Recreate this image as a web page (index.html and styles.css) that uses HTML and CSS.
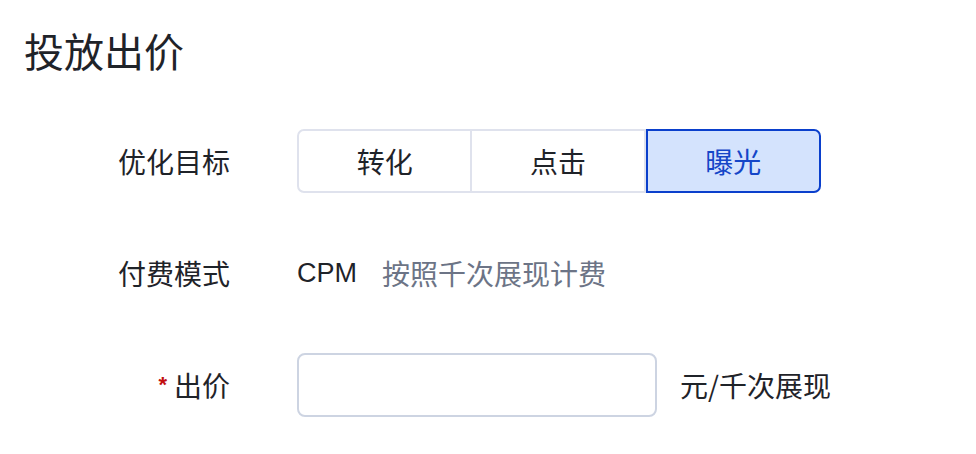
FILE: index.html
```html
<!DOCTYPE html>
<html lang="zh-CN">
<head>
  <meta charset="UTF-8">
  <meta name="viewport" content="width=device-width, initial-scale=1.0">
  <title>投放出价</title>
  <link rel="stylesheet" href="styles.css">
</head>
<body>
  <div id="bid-panel">
    <h2>投放出价</h2>

    <div class="form-row">
      <label class="form-label">优化目标</label>
      <div class="segmented">
        <button class="segment">转化</button>
        <button class="segment">点击</button>
        <button class="segment active">曝光</button>
      </div>
    </div>

    <div class="form-row">
      <label class="form-label">付费模式</label>
      <div class="billing">
        <span class="billing-mode">CPM</span>
        <span class="billing-desc">按照千次展现计费</span>
      </div>
    </div>

    <div class="form-row">
      <label class="form-label"><span class="required">*</span>出价</label>
      <input type="text" class="bid-input">
      <span class="unit">元/千次展现</span>
    </div>
  </div>
</body>
</html>
```

FILE: styles.css
```css
body {
  font-family: "Noto Sans CJK SC", "Noto Sans", sans-serif;
  margin: 0;
  background: #ffffff;
  color: #1f2329;
}

#bid-panel {
  padding: 22px 24px 0 24px;
}

h2 {
  font-size: 40px;
  font-weight: 400;
  line-height: 56px;
  margin: 0 0 51px 0;
  color: #1f2329;
}

.form-row {
  display: flex;
  align-items: center;
  height: 64px;
  margin-bottom: 48px;
}

.form-label {
  width: 206px;
  margin-right: 67px;
  text-align: right;
  font-size: 28px;
  color: #1f2329;
  display: flex;
  justify-content: flex-end;
  align-items: center;
}

.required {
  color: #c20f0f;
  font-size: 22px;
  margin-right: 7px;
  font-family: "Liberation Sans", sans-serif;
  font-weight: bold;
}

.segmented {
  display: flex;
  width: 524px;
  height: 64px;
}

.segment {
  flex: 1;
  font-family: inherit;
  font-size: 28px;
  color: #1f2329;
  background: #ffffff;
  border: 2px solid #dfe2ed;
  border-left: none;
  padding: 0;
  cursor: pointer;
}

.segment:first-child {
  border-left: 2px solid #dfe2ed;
  border-radius: 7px 0 0 7px;
}

.segment.active {
  background: #d4e3fd;
  border: 2px solid #0a3fcc;
  border-radius: 0 7px 7px 0;
  color: #1546c8;
}

.billing {
  display: flex;
  align-items: center;
  font-size: 28px;
}

.billing-mode {
  font-family: "Liberation Sans", "Noto Sans CJK SC", sans-serif;
  font-size: 27px;
  margin-right: 25px;
  color: #1f2329;
}

.billing-desc {
  color: #6c7486;
}

.bid-input {
  box-sizing: border-box;
  width: 360px;
  height: 64px;
  border: 2px solid #cdd4e2;
  border-radius: 8px;
  outline: none;
  font-size: 26px;
  padding: 0 14px;
  margin-right: 23px;
}

.unit {
  font-size: 28px;
  color: #1f2329;
}
```
